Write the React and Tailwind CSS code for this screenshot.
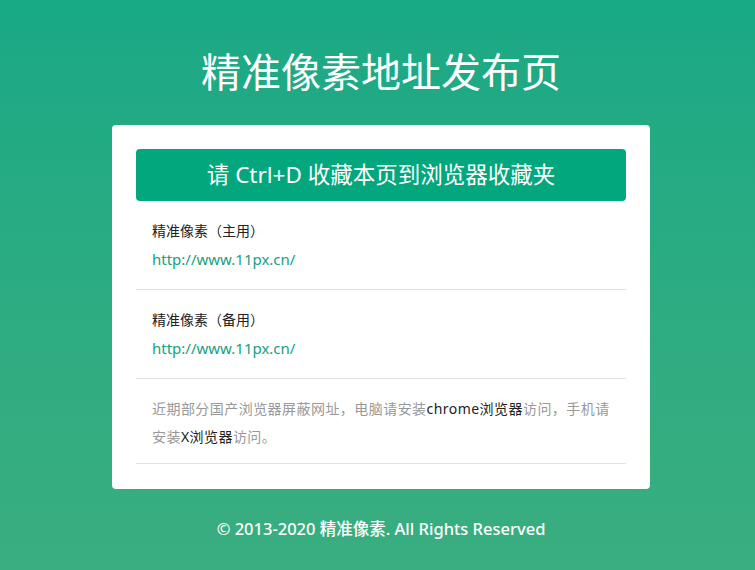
import React from 'react';

const links = [
    { name: '精准像素（主用）', url: 'http://www.11px.cn/' },
    { name: '精准像素（备用）', url: 'http://www.11px.cn/' },
];

const App = () => {
    return (
        <div
            className="min-h-[570px] w-full bg-gradient-to-b from-[#18a985] to-[#3aae7f] pt-[41px] pb-10 pl-[7px]"
            style={{ fontFamily: '"Noto Sans", "Noto Sans CJK SC", sans-serif' }}
        >
            <h1 className="text-center text-[40px] leading-[62px] text-white">精准像素地址发布页</h1>

            <div className="mx-auto mt-[22px] w-[538px] rounded bg-white px-6 pt-6 pb-[25px]">
                <div className="flex h-[52px] items-center justify-center rounded bg-[#02a77e] text-[22.5px] text-white">
                    请 Ctrl+D 收藏本页到浏览器收藏夹
                </div>

                {links.map((link, i) => (
                    <div key={i} className="border-b border-[#e2e2e2] px-4 py-4 text-sm leading-7">
                        <p className="text-[#222]">{link.name}</p>
                        <a href={link.url} className="block text-[15px] leading-7 text-[#17a07f]">
                            {link.url}
                        </a>
                    </div>
                ))}

                {/* notice */}
                <p className="border-b border-[#e2e2e2] px-4 pt-4 pb-3 text-sm leading-7 tracking-[0.45px] text-[#999]">
                    近期部分国产浏览器屏蔽网址，电脑请安装<span className="text-[#222]">chrome浏览器</span>访问，手机请安装<span className="text-[#222]">X浏览器</span>访问。
                </p>
            </div>

            <p className="mt-[28px] text-center text-[16.5px] font-medium leading-6 text-white">
                © 2013-2020 精准像素. All Rights Reserved
            </p>
        </div>
    );
};

export default App;
